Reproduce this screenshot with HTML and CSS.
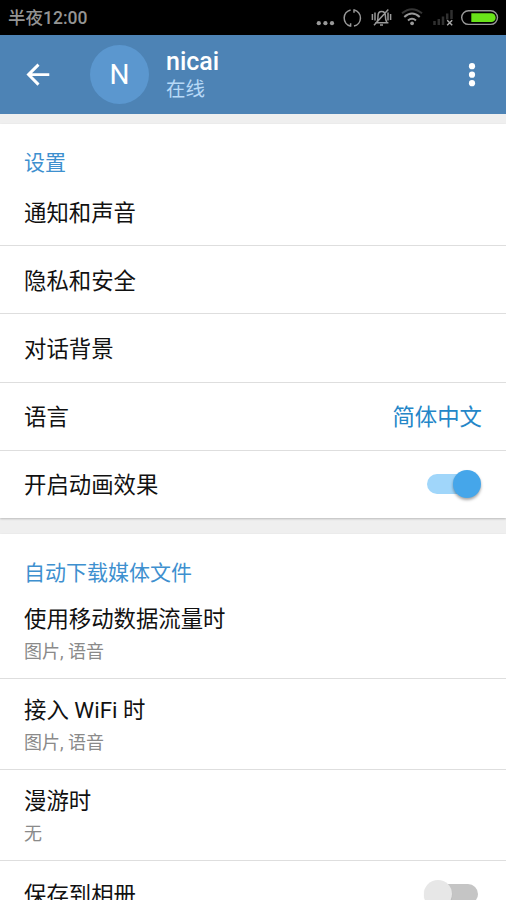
FILE: index.html
```html
<!DOCTYPE html>
<html lang="zh-CN">
<head>
<meta charset="utf-8">
<title>设置</title>
<link rel="stylesheet" href="styles.css">
</head>
<body>
<div class="status">
  <span class="clock">半夜12:00</span>
  <svg class="status-icons" viewBox="306 0 200 35" fill="none">
    <g fill="#999"><circle cx="318.8" cy="23.2" r="2.1"/><circle cx="325.4" cy="23.2" r="2.1"/><circle cx="332" cy="23.2" r="2.1"/></g>
    <g stroke="#999" stroke-width="1.5">
      <path d="M350.3 26A8.3 8.3 0 0 1 350.6 9.9M354.3 10A8.3 8.3 0 0 1 354 26.1"/>
      <path d="M354 9.3v3.4M350.6 23.3v3.4"/>
      <path d="M375.2 22.8h13.2M376.8 22.2c1.3-1.8 1.2-4 1.2-6.1 0-2.8 1.3-4.7 3.6-4.7s3.8 1.9 3.8 4.7c0 2.1 0 4.3 1.4 6.1M380 25h3M388.3 9.5L374 25.3"/>
      <path d="M372.4 14v6M375 12.5v8M388 12.5v8M390.6 14v6" stroke-width="1.5"/>
    </g>
    <path d="M402 13.3Q412 5.2 422 13.3" stroke="#353535" stroke-width="2"/>
    <path d="M404.3 16.9Q412 10 419.7 16.9M408 20.5Q412 17 416 20.5" stroke="#999" stroke-width="2"/>
    <circle cx="412.1" cy="23.3" r="1.9" fill="#999"/>
    <path d="M434.5 21v4M438.8 19v6M443 16.5v8.5M447.2 13.5v6M451.5 10v9" stroke="#303030" stroke-width="2.5"/>
    <path d="M447.2 20.2l5 5M452.2 20.2l-5 5" stroke="#aaa" stroke-width="1.5"/>
    <rect x="461.7" y="10.8" width="35.8" height="13.6" rx="6.8" stroke="#999" stroke-width="1.4"/>
    <path d="M471.3 13.3h20a4.3 4.3 0 0 1 0 8.7h-20z" fill="#69e319"/>
  </svg>
</div>
<header class="bar">
  <svg class="back" viewBox="0 0 24 24" fill="none" stroke="#fff" stroke-width="2.9"><path d="M23.3 11.6H3M12.5 1.6L2.5 11.6l10 10"/></svg>
  <div class="avatar">N</div>
  <div class="who"><div class="name">nicai</div><div class="online">在线</div></div>
  <svg class="more" viewBox="0 0 8 26" fill="#fff"><circle cx="4" cy="4.2" r="3.1"/><circle cx="4" cy="12.7" r="3.1"/><circle cx="4" cy="21.2" r="3.1"/></svg>
</header>
<main>
  <section class="card">
    <h2>设置</h2>
    <div class="row">通知和声音</div>
    <div class="row">隐私和安全</div>
    <div class="row">对话背景</div>
    <div class="row">语言<span class="value">简体中文</span></div>
    <div class="row">开启动画效果<span class="switch on"></span></div>
  </section>
  <section class="card media">
    <h2>自动下载媒体文件</h2>
    <div class="row tall"><div>使用移动数据流量时</div><small>图片, 语音</small></div>
    <div class="row tall"><div>接入 WiFi 时</div><small>图片, 语音</small></div>
    <div class="row tall"><div>漫游时</div><small>无</small></div>
    <div class="row">保存到相册<span class="switch"></span></div>
  </section>
</main>
</body>
</html>
```
FILE: styles.css
```css
* { box-sizing: border-box; }
body {
  margin: 0;
  height: 900px;
  overflow: hidden;
  background: #efefef;
  color: #111;
  font-family: Roboto, "Noto Sans CJK SC", sans-serif;
}
.status {
  height: 35px;
  display: flex;
  align-items: center;
  justify-content: space-between;
  padding-left: 8px;
  background: #000;
}
.clock {
  padding-top: 2px;
  font-family: Roboto, "Noto Sans CJK SC", sans-serif;
  font-size: 17.5px;
  line-height: 33px;
  font-weight: 500;
  color: #949494;
}
.status-icons { width: 200px; height: 35px; }
.bar {
  height: 79px;
  display: flex;
  align-items: center;
  padding: 0 30px 0 26px;
  background: #4d83b5;
  color: #fff;
}
.back { width: 24px; height: 24px; }
.avatar {
  width: 59px;
  height: 59px;
  margin-left: 40px;
  border-radius: 50%;
  background: #5b97cf;
  font-size: 28px;
  line-height: 60px;
  text-align: center;
}
.who { flex: 1; margin-left: 17px; padding-top: 2px; }
.name { font-size: 25px; line-height: 28px; font-weight: 500; }
.online { font-size: 19.5px; line-height: 28px; color: #b7d9f7; }
.more { width: 8px; height: 26px; }
.card {
  margin-top: 10px;
  background: #fff;
  box-shadow: 0 1px 2px rgba(0, 0, 0, .22);
}
.media { margin-top: 16px; }
h2 {
  margin: 0;
  height: 54px;
  padding: 23px 24px 0;
  font-size: 21px;
  line-height: 32px;
  font-weight: 400;
  color: #3e90cf;
}
.row {
  height: 68.2px;
  display: flex;
  align-items: center;
  justify-content: space-between;
  padding: 2px 24px 0;
  border-bottom: 1px solid #dedede;
  font-size: 22.4px;
  line-height: 32px;
}
.row:last-child { border-bottom: 0; height: 67.4px; }
.value { color: #2486c8; }
.tall {
  height: 90.8px;
  flex-direction: column;
  align-items: flex-start;
  justify-content: flex-start;
  padding-top: 15px;
}
small { margin-top: 3px; font-size: 18px; line-height: 28px; color: #8a8a8a; }
.switch {
  position: relative;
  width: 51px;
  height: 20px;
  margin: 0 4px 2px 0;
  border-radius: 10px;
  background: #c5c5c5;
}
.switch::after {
  content: "";
  position: absolute;
  left: -3px;
  top: -4px;
  width: 28px;
  height: 28px;
  border-radius: 50%;
  background: #e7e7e7;
  box-shadow: 0 1px 1px rgba(0, 0, 0, .12);
}
.on { background: #a0d6fa; }
.on::after { left: 26px; background: #45a6ea; box-shadow: 0 2px 3px rgba(0, 0, 0, .35); }
```
